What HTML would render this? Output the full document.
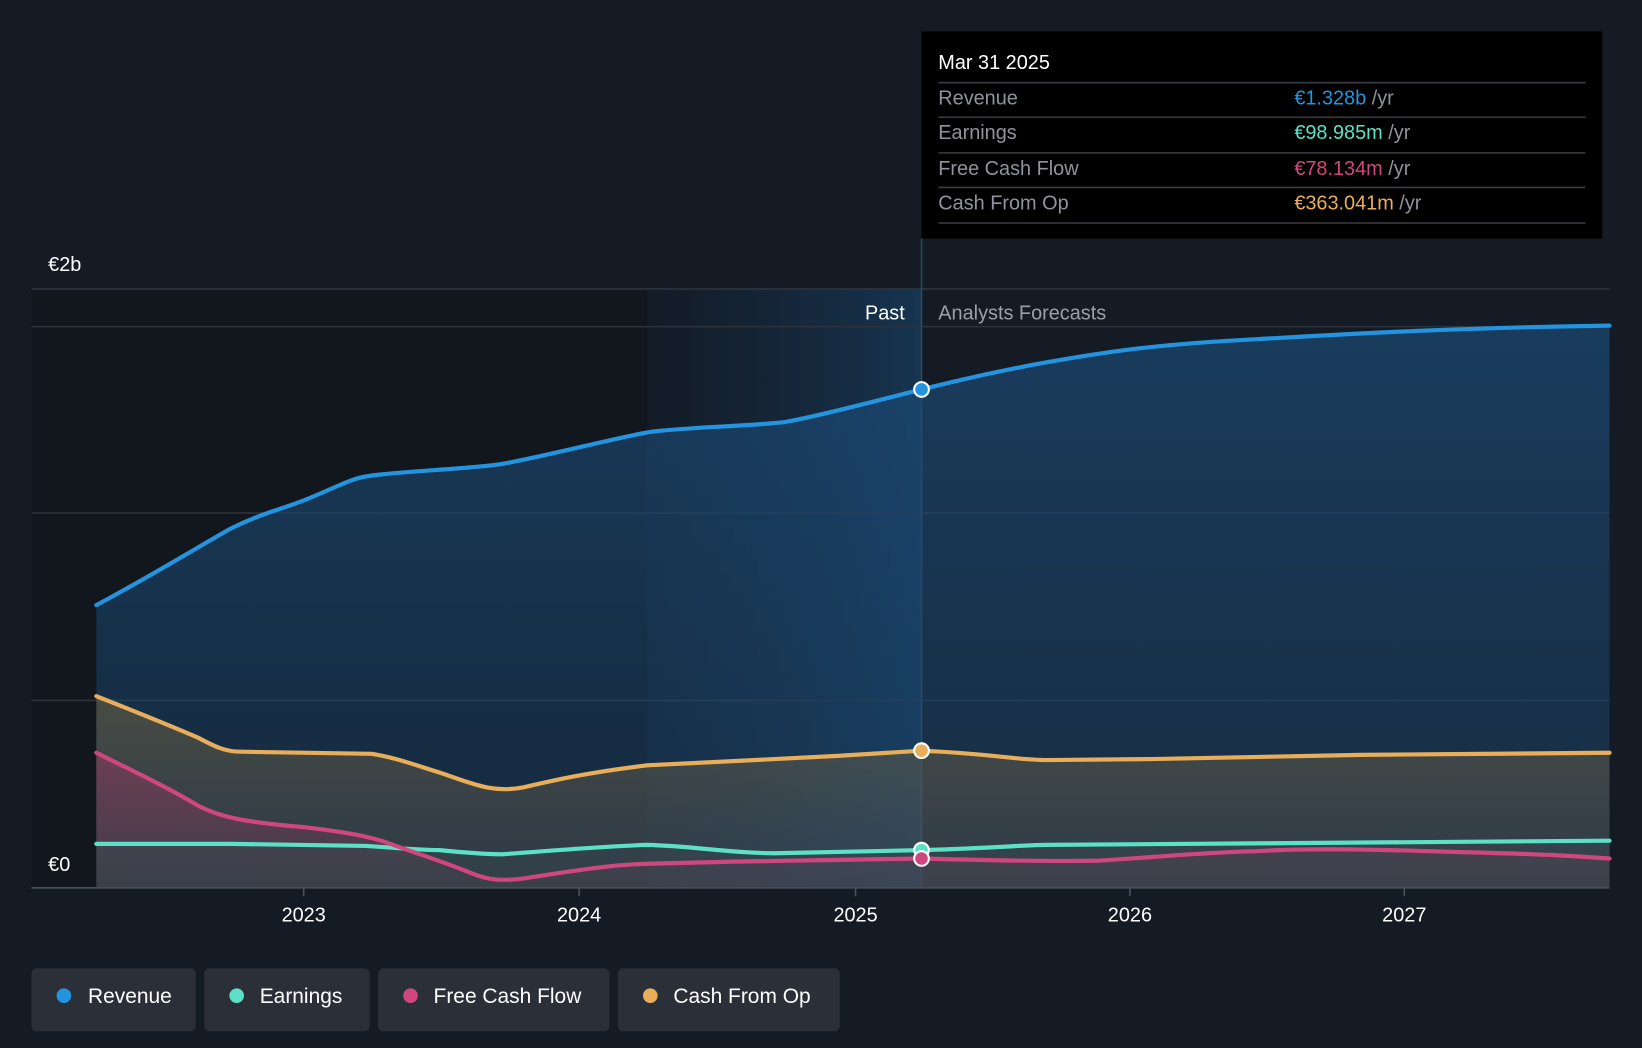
<!DOCTYPE html>
<html><head><meta charset="utf-8"><style>
html,body{margin:0;padding:0;background:#151b24;}
svg{display:block;font-family:"Liberation Sans",sans-serif;}
</style></head><body>
<svg width="1642" height="1048" viewBox="0 0 1568 1001" preserveAspectRatio="none" xmlns="http://www.w3.org/2000/svg">
<defs>
<linearGradient id="hl" x1="0" x2="1" y1="0" y2="0"><stop offset="0" stop-color="#1a3a5c" stop-opacity="0.15"/><stop offset="1" stop-color="#1a4d7a" stop-opacity="0.55"/></linearGradient>
<linearGradient id="rev" x1="0" x2="0" y1="0" y2="1"><stop offset="0" stop-color="#1b4a75" stop-opacity="0.7"/><stop offset="1" stop-color="#1b4a75" stop-opacity="0.35"/></linearGradient>
<linearGradient id="cfo" x1="0" x2="0" y1="0" y2="1"><stop offset="0" stop-color="#6b6040" stop-opacity="0.6"/><stop offset="1" stop-color="#555" stop-opacity="0.35"/></linearGradient>
<linearGradient id="fcf" x1="0" x2="0" y1="0" y2="1"><stop offset="0" stop-color="#8a3b5c" stop-opacity="0.6"/><stop offset="1" stop-color="#8a3b5c" stop-opacity="0.15"/></linearGradient>
</defs>
<rect width="1568" height="1001" fill="#151b24"/>
<rect x="30" y="276" width="850" height="572" fill="#12161d"/>
<rect x="618" y="276" width="262" height="572" fill="url(#hl)"/>
<g stroke="#2c333d" stroke-width="1.5">
<line x1="30" y1="276" x2="1537" y2="276"/><line x1="30" y1="312" x2="1537" y2="312"/>
<line x1="30" y1="490" x2="1537" y2="490"/><line x1="30" y1="669" x2="1537" y2="669"/>
<line x1="30" y1="848" x2="1537" y2="848" stroke="#4a525c"/>
</g>
<line x1="880" y1="228" x2="880" y2="848" stroke="#2f4a66" stroke-width="1.5"/>
<path d="M92,578 C130,558 180,528 220,505 C250,490 270,486 290,478 C320,466 335,457 350,455 C380,450 450,448 480,443 C520,436 580,420 618,413 C650,408 720,407 750,403 C780,398 840,382 880,372 C920,362 960,353 1000,346 C1050,337 1100,329 1200,324 C1300,318 1400,313 1537,311 L1537,848 L92,848Z" fill="url(#rev)"/>
<path d="M92,665 C130,680 160,692 190,705 C205,713 215,718 230,718 L355,720 C380,724 400,732 420,738 C450,748 470,758 500,752 C530,745 560,738 618,731 L700,727 L800,722 L880,717 C950,720 970,726 1000,726 L1100,725 L1300,721 L1537,719 L1537,848 L92,848Z" fill="url(#cfo)"/>
<path d="M92,719 C130,738 160,752 190,770 C210,780 230,785 290,790 C330,795 350,798 370,805 C400,816 420,822 440,830 C460,838 470,843 500,839 C540,833 580,826 618,825 L700,823 L880,820 C950,822 1000,823 1050,822 C1100,819 1150,814 1200,813 C1250,810 1300,811 1400,814 C1480,816 1510,818 1537,820 L1537,848 L92,848Z" fill="url(#fcf)"/>
<path d="M92,806 L220,806 L350,808 C380,810 400,812 420,812 C450,815 470,816 480,816 C520,813 580,808 618,807 C660,808 700,815 740,815 L880,812 C950,810 980,807 1000,807 L1537,803 L1537,848 L92,848Z" fill="#3a4a50" fill-opacity="0.4"/>
<g fill="none" stroke-width="4" stroke-linecap="round">
<path d="M92,578 C130,558 180,528 220,505 C250,490 270,486 290,478 C320,466 335,457 350,455 C380,450 450,448 480,443 C520,436 580,420 618,413 C650,408 720,407 750,403 C780,398 840,382 880,372 C920,362 960,353 1000,346 C1050,337 1100,329 1200,324 C1300,318 1400,313 1537,311" stroke="#2394df"/>
<path d="M92,665 C130,680 160,692 190,705 C205,713 215,718 230,718 L355,720 C380,724 400,732 420,738 C450,748 470,758 500,752 C530,745 560,738 618,731 L700,727 L800,722 L880,717 C950,720 970,726 1000,726 L1100,725 L1300,721 L1537,719" stroke="#e8ae5a"/>
<path d="M92,806 L220,806 L350,808 C380,810 400,812 420,812 C450,815 470,816 480,816 C520,813 580,808 618,807 C660,808 700,815 740,815 L880,812 C950,810 980,807 1000,807 L1537,803" stroke="#5ce0c6"/>
<path d="M92,719 C130,738 160,752 190,770 C210,780 230,785 290,790 C330,795 350,798 370,805 C400,816 420,822 440,830 C460,838 470,843 500,839 C540,833 580,826 618,825 L700,823 L880,820 C950,822 1000,823 1050,822 C1100,819 1150,814 1200,813 C1250,810 1300,811 1400,814 C1480,816 1510,818 1537,820" stroke="#d0477f"/>
</g>
<g stroke="#fff" stroke-width="2">
<circle cx="880" cy="372" r="7" fill="#2394df"/>
<circle cx="880" cy="717" r="7" fill="#e8ae5a"/>
<circle cx="880" cy="812" r="7" fill="#5ce0c6"/>
<circle cx="880" cy="820" r="7" fill="#d0477f"/>
</g>
<text x="46" y="259" fill="#fff" font-size="19">€2b</text>
<text x="46" y="832" fill="#fff" font-size="19">€0</text>
<text x="864" y="305" fill="#fff" font-size="19" text-anchor="end">Past</text>
<text x="896" y="305" fill="#9aa0a8" font-size="19">Analysts Forecasts</text>
<g fill="#fff" font-size="19" text-anchor="middle">
<text x="290" y="880">2023</text><text x="553" y="880">2024</text><text x="817" y="880">2025</text><text x="1079" y="880">2026</text><text x="1341" y="880">2027</text>
</g>
<g stroke="#4a525c" stroke-width="1.5"><line x1="290" y1="848" x2="290" y2="856"/><line x1="553" y1="848" x2="553" y2="856"/><line x1="817" y1="848" x2="817" y2="856"/><line x1="1079" y1="848" x2="1079" y2="856"/><line x1="1341" y1="848" x2="1341" y2="856"/></g>
<rect x="880" y="30" width="650" height="198" fill="#000"/>
<text x="896" y="66" fill="#fff" font-size="19">Mar 31 2025</text>
<g stroke="#3a3d42" stroke-width="1.5"><line x1="896" y1="79" x2="1514" y2="79"/><line x1="896" y1="112" x2="1514" y2="112"/><line x1="896" y1="146" x2="1514" y2="146"/><line x1="896" y1="179" x2="1514" y2="179"/><line x1="896" y1="213" x2="1514" y2="213"/></g>
<g font-size="19" fill="#8f949a">
<text x="896" y="100">Revenue</text><text x="896" y="133">Earnings</text><text x="896" y="167">Free Cash Flow</text><text x="896" y="200">Cash From Op</text>
<text x="1236" y="100"><tspan fill="#2394df">€1.328b</tspan> /yr</text>
<text x="1236" y="133"><tspan fill="#5ce0c6">€98.985m</tspan> /yr</text>
<text x="1236" y="167"><tspan fill="#d0477f">€78.134m</tspan> /yr</text>
<text x="1236" y="200"><tspan fill="#e8ae5a">€363.041m</tspan> /yr</text>
</g>
<g font-size="20" fill="#fff">
<rect x="30" y="925" width="157" height="60" rx="5" fill="#2a2f38"/><circle cx="61" cy="951" r="7" fill="#2394df"/><text x="84" y="958">Revenue</text>
<rect x="195" y="925" width="158" height="60" rx="5" fill="#2a2f38"/><circle cx="226" cy="951" r="7" fill="#5ce0c6"/><text x="248" y="958">Earnings</text>
<rect x="361" y="925" width="221" height="60" rx="5" fill="#2a2f38"/><circle cx="392" cy="951" r="7" fill="#d0477f"/><text x="414" y="958">Free Cash Flow</text>
<rect x="590" y="925" width="212" height="60" rx="5" fill="#2a2f38"/><circle cx="621" cy="951" r="7" fill="#e8ae5a"/><text x="643" y="958">Cash From Op</text>
</g>
</svg>
</body></html>
